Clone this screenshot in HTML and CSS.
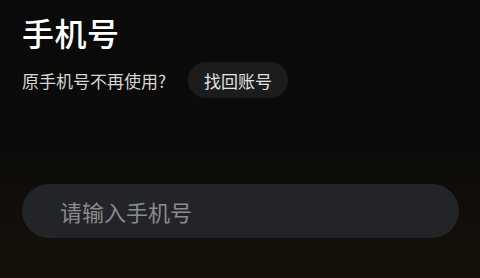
FILE: index.html
```html
<!DOCTYPE html>
<html lang="zh-CN">
<head>
    <meta charset="UTF-8">
    <meta name="viewport" content="width=device-width, initial-scale=1.0">
    <title>手机号</title>
    <link rel="stylesheet" href="styles.css">
</head>
<body>
    <div class="page">
        <h1 class="title">手机号</h1>

        <!-- 找回账号 -->
        <div class="hint-row">
            <span class="hint">原手机号不再使用?</span>
            <button class="recover-btn">找回账号</button>
        </div>

        <!-- 输入框 -->
        <div class="phone-box">
            <input class="phone-input" type="tel" placeholder="请输入手机号">
        </div>
    </div>
</body>
</html>
```

FILE: styles.css
```css
body {
    font-family: "Noto Sans CJK SC", "Noto Sans", sans-serif;
    margin: 0;
    padding: 0;
    height: 100vh;
    background: linear-gradient(180deg, #0a0a0a 0%, #0c0b0a 50%, #161009 100%);
    color: #fff;
    overflow: hidden;
}

.page {
    padding: 12px 21px 0 22px;
}

.title {
    margin: 0;
    font-size: 32px;
    font-weight: 500;
    line-height: 40px;
    letter-spacing: 0.5px;
}

.hint-row {
    display: flex;
    align-items: center;
    margin-top: 10px;
    gap: 22px;
}

.hint {
    font-size: 17px;
    color: #d6d6d6;
}

.recover-btn {
    height: 36px;
    padding: 0 16px;
    border: none;
    border-radius: 18px;
    background-color: #1c1c1d;
    color: #e2e2e2;
    font-family: inherit;
    font-size: 17px;
}

.phone-box {
    margin-top: 86px;
    height: 54px;
    border-radius: 27px;
    background-color: #232428;
    display: flex;
    align-items: center;
    padding: 0 36px;
}

.phone-input {
    width: 100%;
    border: none;
    outline: none;
    background: transparent;
    color: #fff;
    font-family: inherit;
    font-size: 22px;
}

.phone-input::placeholder {
    color: #8b8c8f;
}
```
